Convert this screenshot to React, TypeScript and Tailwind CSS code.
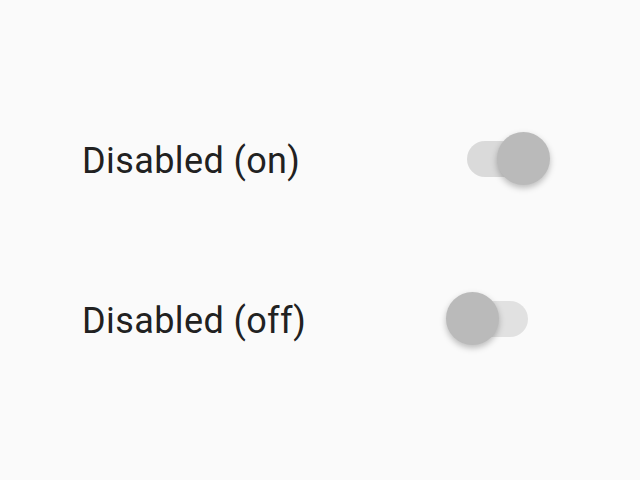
import React from "react";

interface SwitchRowProps {
  label: string;
  on: boolean;
}

const SwitchRow: React.FC<SwitchRowProps> = ({ label, on }) => {
  return (
    <div className="flex h-[160px] items-center justify-between pl-[82px] pr-[112px]">
      <span className="pt-[3px] text-[36px] leading-none tracking-[0.4px] text-[#212121]">{label}</span>
      <div
        className={
          on
            ? "relative h-[36px] w-[61px] rounded-full bg-[#dadada]"
            : "relative h-[36px] w-[61px] rounded-full bg-[#e1e1e1]"
        }
      >
        <div
          className={
            on
              ? "absolute left-[30px] top-[-9px] h-[53px] w-[53px] rounded-full bg-[#bababa] shadow-[0_3px_6px_rgba(0,0,0,0.25)]"
              : "absolute left-[-21px] top-[-9px] h-[53px] w-[53px] rounded-full bg-[#bababa] shadow-[0_3px_6px_rgba(0,0,0,0.25)]"
          }
        />
      </div>
    </div>
  );
};

export default function App() {
  return (
    <div
      className="h-[480px] w-[640px] bg-[#fafafa] pt-[79px]"
      style={{ fontFamily: "Roboto, sans-serif" }}
    >
      <SwitchRow label="Disabled (on)" on />
      <SwitchRow label="Disabled (off)" on={false} />
    </div>
  );
}
